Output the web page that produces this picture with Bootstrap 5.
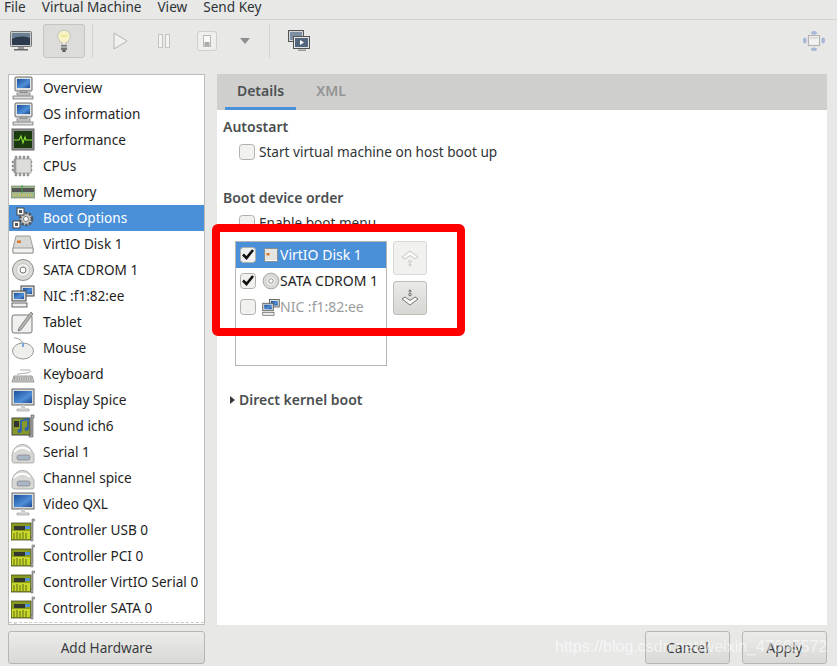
<!DOCTYPE html>
<html lang="en">
<head>
<meta charset="utf-8">
<title>Virtual Machine</title>
<link href="https://cdn.jsdelivr.net/npm/bootstrap@5.3.0/dist/css/bootstrap.min.css" rel="stylesheet">
<style>
html,body{height:666px;overflow:hidden}
body{background:#e8e8e7;font-family:"Noto Sans","DejaVu Sans",sans-serif;font-size:13.6px;color:#2e3436;position:relative;line-height:20px}
.menu-strip{height:20px;border-bottom:1px solid #d3d3d0;padding:0 0 0 4px;gap:16px;color:#2e3436;line-height:13px}
.tool-strip{height:54px;padding:4px 10px 16px}
.tb-icon{display:block;flex:none}
.bulb-btn{width:42px;height:34px;background:#dcdcda;border:1px solid #c4c4c0;border-radius:3px;margin:0 7px 0 11px}
.tb-sep{width:1px;height:34px;background:#d3d3d0}
.gap-play{margin-left:20px}
.gap-pause{margin-left:30px}
.gap-stop{margin-left:27px}
.gap-caret{margin-left:23px}
.gap-sep{margin-left:19px}
.gap-screens{margin-left:18px}
.gap-move{margin-right:2px}
.stop-btn{width:20px;height:20px;border:1px solid #cfcfcc;border-radius:3px;background:#efefee}
.workspace{height:551px;padding:0 10px 0 8px;gap:12px}
.hw-list{width:197px;background:#fff;border:1px solid #bcbcb8;overflow:hidden;flex:none;height:551px;position:relative}
.hw-list::after{content:"";position:absolute;left:0;right:0;bottom:1px;border-bottom:1px dashed #c9c9c6}
.hw-row{height:26px;padding-left:2px;gap:8px;color:#1e1e1e;white-space:nowrap;flex:none}
.hw-row svg{width:24px;height:24px;flex:none}
.hw-active{background:#4a90d9;color:#fff}
.detail-pane{width:610px;background:#fff}
.tab-head{height:36px;background:#cfcfcd;padding-left:8px;gap:0;font-size:14px}
.tab-item{width:71px;height:36px;text-align:center;padding-top:7px;font-weight:600;color:#4d5153;border-bottom:3px solid #4a90d9}
.tab-off{border-bottom:0;color:#929595;width:70px}
.pane-body{padding:7px 6px 0;position:relative;height:515px}
.sec-title{font-weight:600;color:#4a4e50;height:20px;font-size:14px}
.sec-next{margin-top:26px}
.chk-line{margin-left:16px;gap:4px;height:20px;margin-top:5px}
.gt-check{width:16px;height:16px;margin:0;flex:none;border:1px solid #b0b0ac;border-radius:3px;background-color:#f1f1ef;background-image:none;box-shadow:none}
.gt-check:checked{background-color:#f1f1ef;border-color:#b0b0ac;background-size:14px;background-image:url("data:image/svg+xml,%3Csvg xmlns='http://www.w3.org/2000/svg' viewBox='0 0 14 14'%3E%3Cpath d='M2 6.500l3.500 3.500 6.500-8' fill='none' stroke='%23111' stroke-width='2.600'/%3E%3C/svg%3E")}
.boot-wrap{margin:8px 0 0 12px;gap:6px}
.boot-list{width:152px;height:125px;border:1px solid #b5b5b2;background:#fff;flex:none;font-size:14px}
.boot-row{height:26px;padding-left:4px;white-space:nowrap;color:#1e1e1e}
.boot-row svg{width:18px;height:18px;flex:none;margin:0 0 0 6px}
.boot-sel{background:#4a90d9;color:#fff}
.boot-dim{color:#9a9c9c}
.move-col{gap:6px}
.move-btn{width:34px;height:34px;background:linear-gradient(#e9e9e7,#d7d7d4);border:1px solid #bdbdb9;border-radius:3px;padding:0}
.move-off{background:#f1f1f0;border-color:#d8d8d6}
.kernel-line{margin:24px 0 0 7px;gap:4px;font-weight:600;color:#4a4e50;font-size:14px}
.caret-r{width:0;height:0;border-left:5px solid #3a3a3a;border-top:4px solid transparent;border-bottom:4px solid transparent}
.foot-row{height:41px;padding:6px 10px 0 8px}
.gt-btn{height:33px;background:linear-gradient(#ececea,#d8d8d5);border:1px solid #b6b6b2;border-radius:3px;color:#3a3d3f;font-size:13.6px;padding:0;line-height:20px}
.gt-btn:hover{background:#e0e0de}
.add-btn{width:197px}
.act-btn{width:85px}
.cancel-gap{margin-right:12px}
.red-mark{position:absolute;left:212px;top:224px;width:253px;height:112px;border:8px solid #fe0000;border-radius:6px;pointer-events:none}
.wm{position:absolute;left:555px;top:638px;color:#fff;opacity:.6;font-family:"Liberation Sans",sans-serif;font-size:16px;line-height:18px;white-space:nowrap;pointer-events:none}
</style>
</head>
<body>
<svg width="0" height="0" class="position-absolute">
<defs>
<linearGradient id="scr" x1="0" y1="0" x2="1" y2="1"><stop offset="0" stop-color="#1c4f9c"/><stop offset=".6" stop-color="#4f8fd8"/><stop offset="1" stop-color="#1d4a90"/></linearGradient>
<symbol id="i-pc" viewBox="0 0 24 24"><rect x="4" y="1" width="17" height="14" rx="1" fill="#dfe2e2" stroke="#666"/><rect x="6" y="3" width="13" height="9" fill="url(#scr)"/><path d="M9 15h7v2H9z" fill="#bbb" stroke="#777" stroke-width=".5"/><rect x="6" y="17" width="13" height="2" fill="#eee" stroke="#666" stroke-width=".7"/><rect x="2" y="20" width="20" height="3" fill="#ddd" stroke="#666" stroke-width=".7"/></symbol>
<symbol id="i-perf" viewBox="0 0 24 24"><rect x="1" y="1" width="22" height="21" fill="#8a8c8a" stroke="#666"/><rect x="3" y="3" width="18" height="17" fill="#1c3a10"/><path d="M3 12h5l2-4 2 7 2-6 1 3h6" fill="none" stroke="#8ae234" stroke-width="1.100"/></symbol>
<symbol id="i-cpu" viewBox="0 0 24 24"><path d="M3 5h1V2h2v3h2V2h2v3h2V2h2v3h2V2h2v3h2v2h1v2h-1v2h1v2h-1v2h1v2h-1v2h-2v3h-2v-3h-2v3h-2v-3h-2v3H8v-3H6v3H4v-3H3v-2H1v-2h2v-2H1v-2h2V9H1V7h2z" fill="#9b9d9a" stroke="#808280" stroke-width=".4"/><rect x="5" y="5" width="15" height="14" rx="1" fill="#dcdcda" stroke="#999" stroke-width=".6"/></symbol>
<symbol id="i-mem" viewBox="0 0 24 24"><rect x="0" y="6" width="24" height="12" fill="#9fb58d" stroke="#6b7a60" stroke-width=".6"/><rect x="1" y="8" width="22" height="4" fill="#555"/><path d="M11 5v8" stroke="#3aa23a"/><path d="M2 15h20" stroke="#d6c25c" stroke-width="2" stroke-dasharray="1 1"/></symbol>
<symbol id="i-boot" viewBox="0 0 24 24"><circle cx="15" cy="13" r="6" fill="#c9cbc8" stroke="#555" stroke-width="2.600" stroke-dasharray="2.400 1.400"/><circle cx="15" cy="13" r="2.500" fill="#fff" stroke="#555" stroke-width=".7"/><rect x="6" y="2" width="7" height="7" fill="#fff" stroke="#444"/><rect x="8" y="4" width="3" height="3" fill="#555"/><rect x="2" y="15" width="7" height="7" fill="#fff" stroke="#444"/><rect x="4" y="17" width="3" height="3" fill="#555"/></symbol>
<symbol id="i-disk" viewBox="0 0 24 24"><path d="M5 4h14l3 12v5H2v-5z" fill="#d8d8d5" stroke="#8b8b88" stroke-width=".8"/><path d="M2 16h20v5H2z" fill="#f1f1ee" stroke="#8b8b88" stroke-width=".8"/><rect x="6" y="8.500" width="4" height="2.500" fill="#d87d2e"/></symbol>
<symbol id="i-disk2" viewBox="0 0 18 18"><rect x="2.500" y="2.500" width="13" height="13" rx="1" fill="#e4e4e1" stroke="#8e8e8b"/><rect x="4" y="14" width="11" height="1" fill="#fff"/><rect x="4.500" y="7" width="3" height="2.500" fill="#d87d2e"/></symbol>
<symbol id="i-cd" viewBox="0 0 24 24"><circle cx="12" cy="12" r="10.500" fill="#dadad6" stroke="#8d8d8a"/><circle cx="12" cy="12" r="6.500" fill="#eeeeea" stroke="#b7b7b3" stroke-width=".6"/><circle cx="12" cy="12" r="3" fill="#fff" stroke="#777"/></symbol>
<symbol id="i-nic" viewBox="0 0 24 24"><rect x="10" y="2" width="13" height="10" fill="#d8dbdc" stroke="#444"/><rect x="12" y="4" width="9" height="6" fill="url(#scr)"/><rect x="1" y="7" width="14" height="10" fill="#d8dbdc" stroke="#444"/><rect x="3" y="9" width="10" height="6" fill="url(#scr)"/><rect x="1" y="19" width="15" height="4" fill="#eee" stroke="#444" stroke-width=".8"/></symbol>
<symbol id="i-tablet" viewBox="0 0 24 24"><rect x="1" y="5" width="20" height="18" rx="2" fill="#f0f0ee" stroke="#777"/><path d="M8 18l12-16 2 2L10 20l-3 1z" fill="#b5b5b2" stroke="#666" stroke-width=".7"/></symbol>
<symbol id="i-mouse" viewBox="0 0 24 24"><ellipse cx="12" cy="15" rx="10.500" ry="8" fill="#eeeeeb" stroke="#9a9a97"/><path d="M3 2c4 0 9 2 9 8" fill="none" stroke="#9a9a97"/><path d="M11 7h2v4h-2z" fill="#79a7de"/></symbol>
<symbol id="i-kbd" viewBox="0 0 24 24"><path d="M3 14h18l2 6H1z" fill="#d6d6d2" stroke="#777" stroke-width=".7"/><path d="M3 16h18M3 18h18" stroke="#777" stroke-dasharray="1.500 .8"/><path d="M6 13c3-3 10 0 14-4M9 8h10" fill="none" stroke="#aaa"/></symbol>
<symbol id="i-disp" viewBox="0 0 24 24"><rect x="1" y="1" width="22" height="16" fill="#d6d9da" stroke="#666"/><rect x="3" y="3" width="18" height="12" fill="url(#scr)"/><path d="M10 17h4v3h-4z" fill="#ccc"/><path d="M6 21h12v2H6z" fill="#e5e5e5" stroke="#888" stroke-width=".6"/></symbol>
<symbol id="i-snd" viewBox="0 0 24 24"><rect x="1" y="4" width="18" height="17" fill="#8a9a2a" stroke="#444"/><path d="M20 1h3v3h-1v19h-4v-2h2z" fill="#aaa" stroke="#555" stroke-width=".6"/><rect x="3" y="7" width="5" height="6" fill="#333"/><path d="M10 17V7l7-2v10" fill="none" stroke="#2f62b0" stroke-width="1.800"/><circle cx="8.500" cy="17" r="2" fill="#2f62b0"/><circle cx="15.500" cy="15" r="2" fill="#2f62b0"/></symbol>
<symbol id="i-ser" viewBox="0 0 24 24"><path d="M2 11C5 4 14 2 19 8l4 6v7c0 2-1 2-2 2H3c-1 0-2-1-2-2v-6z" fill="#d7d7d4" stroke="#999" stroke-width=".7"/><path d="M3 12c4-5 11-6 16-1" fill="none" stroke="#fff" stroke-width="2"/><rect x="6" y="15" width="13" height="5" rx="2" fill="#a9b6c6" stroke="#777" stroke-width=".6"/></symbol>
<symbol id="i-ctl" viewBox="0 0 24 24"><rect x="0" y="5" width="20" height="17" fill="#8a9a1f" stroke="#4a4f22" stroke-width=".8"/><path d="M1 13h18v8H1z" fill="#c9d82b"/><path d="M3 15v6M6 14v7M9 15v6M12 14v7M15 15v6" stroke="#5f6d12"/><rect x="3" y="8" width="11" height="4" fill="#33382f"/><rect x="14" y="8" width="5" height="3" fill="#4f8fd8"/><path d="M21 1h2.500v2H22v20h-2v-4h1z" fill="#b4b4b0" stroke="#555" stroke-width=".5"/></symbol>
</defs>
</svg>

<div class="menu-strip d-flex align-items-start"><span>File</span><span>Virtual Machine</span><span>View</span><span>Send Key</span></div>

<div class="tool-strip d-flex align-items-center">
<svg class="tb-icon" width="22" height="20" viewBox="0 0 22 20"><rect x="0.500" y="0.500" width="21" height="15" rx="1" fill="#c8cbcc" stroke="#777"/><rect x="2" y="2" width="18" height="12" fill="#2c3a4d"/><path d="M2 2h18v5C14 5 8 5 2 8z" fill="#6c7f94"/><path d="M8 16h6v2H8z" fill="#999"/><path d="M4 18h14v1.500H4z" fill="#666"/></svg>
<div class="bulb-btn d-flex align-items-center justify-content-center"><svg width="14" height="24" viewBox="0 0 14 24"><circle cx="7" cy="7.500" r="6.300" fill="#f8f4c6" stroke="#c2c2b8"/><path d="M4 6c2 1.500 4 1.500 6 0" stroke="#e3d95a" fill="none"/><path d="M5 13v3h4v-3" fill="#ededdf" stroke="#bbb"/><rect x="4" y="16" width="6" height="5" fill="#777"/><rect x="4" y="17.500" width="6" height="1" fill="#ddd"/><rect x="5.500" y="21" width="3" height="2" fill="#555"/></svg></div>
<div class="tb-sep"></div>
<svg class="tb-icon gap-play" width="15" height="18" viewBox="0 0 15 18"><path d="M1 1l13 8-13 8z" fill="#f1f1f0" stroke="#b5b5b3"/></svg>
<svg class="tb-icon gap-pause" width="12" height="14" viewBox="0 0 12 14"><rect x=".5" y=".5" width="4" height="13" fill="#f3f3f2" stroke="#c4c4c2"/><rect x="7.500" y=".5" width="4" height="13" fill="#f3f3f2" stroke="#c4c4c2"/></svg>
<div class="stop-btn gap-stop d-flex align-items-center justify-content-center"><svg width="8" height="12" viewBox="0 0 8 12"><rect x=".5" y=".5" width="7" height="11" fill="#f9f9f8" stroke="#b9b9b7"/><rect x="1.500" y="7" width="5" height="4" fill="#aaa"/></svg></div>
<svg class="tb-icon gap-caret" width="10" height="6" viewBox="0 0 10 6"><path d="M0 0h10L5 6z" fill="#8c8f90"/></svg>
<div class="tb-sep gap-sep"></div>
<svg class="tb-icon gap-screens" width="22" height="22" viewBox="0 0 22 22"><rect x=".5" y=".5" width="15" height="11" fill="#d3d6d8" stroke="#555"/><rect x="2" y="2" width="12" height="8" fill="#7f8fa3"/><rect x="5.500" y="6.500" width="16" height="12" fill="#e3e5e6" stroke="#555"/><rect x="7" y="8" width="13" height="9" fill="#54667e"/><path d="M12 10l4 2.500-4 2.500z" fill="#fff"/><path d="M10 19.500h8v1.500h-8z" fill="#999"/></svg>
<svg class="tb-icon ms-auto gap-move" width="22" height="20" viewBox="0 0 22 20"><rect x="5.500" y="4.500" width="11" height="10" fill="#f2f2f1" stroke="#b3b3b1" stroke-width="1.200"/><rect x="7" y="6" width="8" height="2" fill="#dcdcda"/><ellipse cx="11" cy="1.800" rx="3" ry="1.800" fill="#a6b8d6"/><ellipse cx="11" cy="18.200" rx="3" ry="1.800" fill="#a6b8d6"/><ellipse cx="1.800" cy="9.500" rx="1.800" ry="3" fill="#a6b8d6"/><ellipse cx="20.200" cy="9.500" rx="1.800" ry="3" fill="#a6b8d6"/></svg>
</div>

<div class="workspace d-flex">
<div class="hw-list d-flex flex-column">
<div class="hw-row d-flex align-items-center"><svg><use href="#i-pc"/></svg>Overview</div>
<div class="hw-row d-flex align-items-center"><svg><use href="#i-pc"/></svg>OS information</div>
<div class="hw-row d-flex align-items-center"><svg><use href="#i-perf"/></svg>Performance</div>
<div class="hw-row d-flex align-items-center"><svg><use href="#i-cpu"/></svg>CPUs</div>
<div class="hw-row d-flex align-items-center"><svg><use href="#i-mem"/></svg>Memory</div>
<div class="hw-row hw-active d-flex align-items-center"><svg><use href="#i-boot"/></svg>Boot Options</div>
<div class="hw-row d-flex align-items-center"><svg><use href="#i-disk"/></svg>VirtIO Disk 1</div>
<div class="hw-row d-flex align-items-center"><svg><use href="#i-cd"/></svg>SATA CDROM 1</div>
<div class="hw-row d-flex align-items-center"><svg><use href="#i-nic"/></svg>NIC :f1:82:ee</div>
<div class="hw-row d-flex align-items-center"><svg><use href="#i-tablet"/></svg>Tablet</div>
<div class="hw-row d-flex align-items-center"><svg><use href="#i-mouse"/></svg>Mouse</div>
<div class="hw-row d-flex align-items-center"><svg><use href="#i-kbd"/></svg>Keyboard</div>
<div class="hw-row d-flex align-items-center"><svg><use href="#i-disp"/></svg>Display Spice</div>
<div class="hw-row d-flex align-items-center"><svg><use href="#i-snd"/></svg>Sound ich6</div>
<div class="hw-row d-flex align-items-center"><svg><use href="#i-ser"/></svg>Serial 1</div>
<div class="hw-row d-flex align-items-center"><svg><use href="#i-ser"/></svg>Channel spice</div>
<div class="hw-row d-flex align-items-center"><svg><use href="#i-disp"/></svg>Video QXL</div>
<div class="hw-row d-flex align-items-center"><svg><use href="#i-ctl"/></svg>Controller USB 0</div>
<div class="hw-row d-flex align-items-center"><svg><use href="#i-ctl"/></svg>Controller PCI 0</div>
<div class="hw-row d-flex align-items-center"><svg><use href="#i-ctl"/></svg>Controller VirtIO Serial 0</div>
<div class="hw-row d-flex align-items-center"><svg><use href="#i-ctl"/></svg>Controller SATA 0</div>
<div class="hw-row d-flex align-items-center"><svg><use href="#i-mouse"/></svg></div>
</div>

<div class="detail-pane d-flex flex-column">
<div class="tab-head d-flex"><div class="tab-item">Details</div><div class="tab-item tab-off">XML</div></div>
<div class="pane-body">
<div class="sec-title">Autostart</div>
<div class="chk-line d-flex align-items-center"><input class="form-check-input gt-check" type="checkbox" aria-label="Start virtual machine on host boot up"><span>Start virtual machine on host boot up</span></div>
<div class="sec-title sec-next">Boot device order</div>
<div class="chk-line d-flex align-items-center"><input class="form-check-input gt-check" type="checkbox" aria-label="Enable boot menu"><span>Enable boot menu</span></div>
<div class="boot-wrap d-flex">
<div class="boot-list">
<div class="boot-row boot-sel d-flex align-items-center"><input class="form-check-input gt-check" type="checkbox" checked aria-label="VirtIO Disk 1"><svg><use href="#i-disk2"/></svg>VirtIO Disk 1</div>
<div class="boot-row d-flex align-items-center"><input class="form-check-input gt-check" type="checkbox" checked aria-label="SATA CDROM 1"><svg><use href="#i-cd"/></svg>SATA CDROM 1</div>
<div class="boot-row boot-dim d-flex align-items-center"><input class="form-check-input gt-check" type="checkbox" aria-label="NIC :f1:82:ee"><svg><use href="#i-nic"/></svg>NIC :f1:82:ee</div>
</div>
<div class="d-flex flex-column move-col">
<button class="move-btn move-off d-flex align-items-center justify-content-center" type="button" aria-label="Up"><svg width="18" height="18" viewBox="0 0 18 18"><path d="M1 8l8-6 8 6-3 2-5-3.500L4 10z" fill="#fafaf9" stroke="#c6c6c3"/><circle cx="9" cy="12.500" r="1.300" fill="none" stroke="#c6c6c3"/><circle cx="9" cy="16" r="1" fill="none" stroke="#c6c6c3"/></svg></button>
<button class="move-btn d-flex align-items-center justify-content-center" type="button" aria-label="Down"><svg width="18" height="18" viewBox="0 0 18 18"><circle cx="9" cy="2" r="1" fill="none" stroke="#6a6a68"/><circle cx="9" cy="5.500" r="1.300" fill="none" stroke="#6a6a68"/><path d="M1 10l8 6 8-6-3-2-5 3.500L4 8z" fill="#fafaf9" stroke="#777775"/></svg></button>
</div>
</div>
<div class="kernel-line d-flex align-items-center"><span class="caret-r"></span><span>Direct kernel boot</span></div>
</div>
</div>
</div>

<div class="foot-row d-flex">
<button class="gt-btn add-btn btn" type="button">Add Hardware</button>
<button class="gt-btn act-btn btn ms-auto cancel-gap" type="button">Cancel</button>
<button class="gt-btn act-btn btn" type="button">Apply</button>
</div>

<div class="red-mark"></div>
<div class="wm">https://blog.csdn.net/weixin_47665572</div>
</body>
</html>
